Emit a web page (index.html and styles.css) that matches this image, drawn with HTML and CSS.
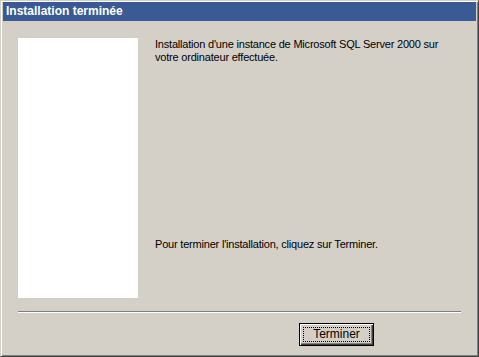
FILE: index.html
```html
<!DOCTYPE html>
<html lang="fr">
<head>
  <meta charset="UTF-8" />
  <title>Installation terminée</title>
  <link rel="stylesheet" href="styles.css">
</head>
<body>
  <div class="window">
    <div class="titlebar">Installation terminée</div>
    <div class="content">
      <!-- Side picture area (blank) -->
      <div class="side-panel"></div>
      <div class="text-col">
        <p>Installation d'une instance de Microsoft SQL Server 2000 sur votre ordinateur effectuée.</p>
        <p class="finish-note">Pour terminer l'installation, cliquez sur Terminer.</p>
      </div>
    </div>
    <div class="separator"></div>
    <div class="footer">
      <button class="btn default"><span>Terminer</span></button>
    </div>
  </div>
</body>
</html>
```

FILE: styles.css
```css
* {
  box-sizing: border-box;
  margin: 0;
  padding: 0;
}
body {
  font-family: "Liberation Sans", Arial, sans-serif;
  font-size: 11px;
  background: #d4d0c8;
}

/* Window frame with classic 3D border */
.window {
  width: 479px;
  height: 357px;
  background: #d4d0c8;
  border-top: 1px solid #d4d0c8;
  border-left: 1px solid #d4d0c8;
  border-right: 1px solid #404040;
  border-bottom: 1px solid #404040;
  box-shadow: inset 1px 1px #fff, inset -1px -1px #808080;
  padding: 1px 2px 2px 2px;
  display: flex;
  flex-direction: column;
}

.titlebar {
  height: 19px;
  background: #3a5a95;
  color: #fff;
  font-weight: bold;
  font-size: 12px;
  line-height: 19px;
  padding-left: 3px;
}

.content {
  display: flex;
  padding: 17px 15px 0 15px;
  gap: 17px;
}
.side-panel {
  width: 120px;
  height: 260px;
  background: #fff;
  flex: none;
}
.text-col {
  flex: 1;
  line-height: 13px;
  color: #000;
  letter-spacing: -0.2px;
}
.finish-note {
  margin-top: 174px;
}

.separator {
  margin: 13px 15px 0 15px;
  height: 2px;
  border-top: 1px solid #808080;
  border-bottom: 1px solid #fff;
}

.footer {
  padding: 10px 0 0 296px;
}
.btn {
  width: 75px;
  height: 23px;
  background: #d4d0c8;
  font-family: "Liberation Sans", Arial, sans-serif;
  font-size: 12px;
  color: #000;
  border: 1px solid #000;
  box-shadow: inset 1px 1px #fff, inset -1px -1px #404040, inset -2px -2px #808080;
  padding: 3px;
  display: flex;
}
.btn span {
  flex: 1;
  border: 1px dotted #000;
  line-height: 13px;
  text-align: center;
}
```
